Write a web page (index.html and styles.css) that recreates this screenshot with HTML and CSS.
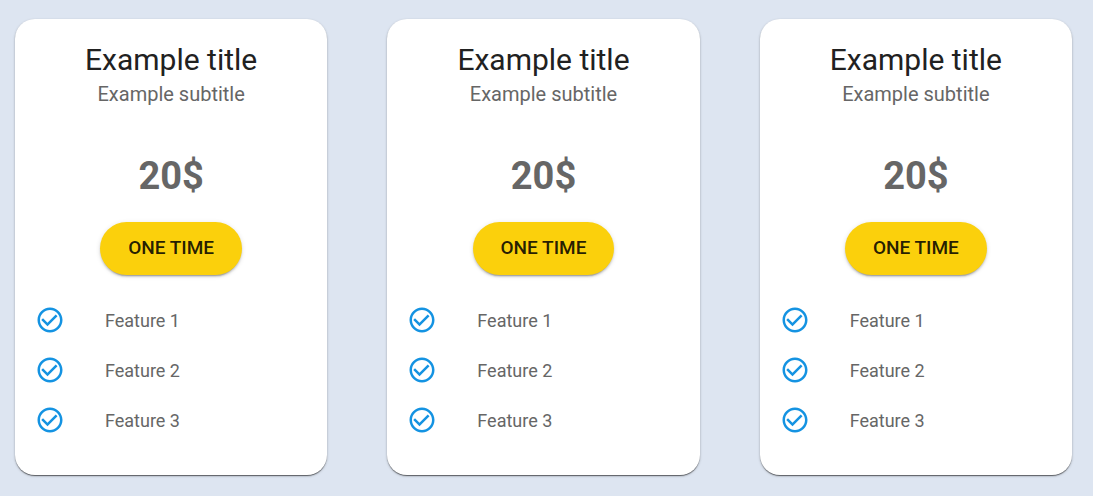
FILE: index.html
```html
<!DOCTYPE html>
<html lang="en">
<head>
<meta charset="utf-8">
<title>Pricing</title>
<link rel="stylesheet" href="styles.css">
</head>
<body>
<svg class="defs" aria-hidden="true"><symbol id="check" viewBox="0 0 24 24"><path d="M16.59 7.58 10 14.17l-3.59-3.58L5 12l5 5 8-8zM12 2C6.48 2 2 6.48 2 12s4.48 10 10 10 10-4.48 10-10S17.52 2 12 2zm0 18c-4.42 0-8-3.58-8-8s3.58-8 8-8 8 3.58 8 8-3.58 8-8 8z"/></symbol></svg>
<main class="plans">
<section class="card">
<h2 class="title">Example title</h2>
<p class="subtitle">Example subtitle</p>
<p class="price">20$</p>
<button class="buy" type="button">ONE TIME</button>
<ul class="features">
<li class="feature"><svg class="icon" aria-hidden="true"><use href="#check"/></svg>Feature 1</li>
<li class="feature"><svg class="icon" aria-hidden="true"><use href="#check"/></svg>Feature 2</li>
<li class="feature"><svg class="icon" aria-hidden="true"><use href="#check"/></svg>Feature 3</li>
</ul>
</section>
<section class="card">
<h2 class="title">Example title</h2>
<p class="subtitle">Example subtitle</p>
<p class="price">20$</p>
<button class="buy" type="button">ONE TIME</button>
<ul class="features">
<li class="feature"><svg class="icon" aria-hidden="true"><use href="#check"/></svg>Feature 1</li>
<li class="feature"><svg class="icon" aria-hidden="true"><use href="#check"/></svg>Feature 2</li>
<li class="feature"><svg class="icon" aria-hidden="true"><use href="#check"/></svg>Feature 3</li>
</ul>
</section>
<section class="card">
<h2 class="title">Example title</h2>
<p class="subtitle">Example subtitle</p>
<p class="price">20$</p>
<button class="buy" type="button">ONE TIME</button>
<ul class="features">
<li class="feature"><svg class="icon" aria-hidden="true"><use href="#check"/></svg>Feature 1</li>
<li class="feature"><svg class="icon" aria-hidden="true"><use href="#check"/></svg>Feature 2</li>
<li class="feature"><svg class="icon" aria-hidden="true"><use href="#check"/></svg>Feature 3</li>
</ul>
</section>
</main>
</body>
</html>
```
FILE: styles.css
```css
* { box-sizing: border-box; }
body {
  margin: 0;
  background: #dde5f1;
  color: #666;
  font-family: Roboto, sans-serif;
}
.defs { display: none; }
.plans {
  display: grid;
  grid-template-columns: repeat(3, 1fr);
  gap: 60px;
  padding: 19px 21px 21px 15px;
}
.card {
  display: flex;
  flex-direction: column;
  align-items: center;
  padding: 22px 20px 30px;
  border-radius: 20px;
  background: #fff;
  box-shadow: 0 2px 1px -1px rgba(0,0,0,.3), 0 1px 1px rgba(0,0,0,.3), 0 1px 3px rgba(0,0,0,.2);
}
.title {
  margin: 0;
  color: #212121;
  font-size: 30px;
  font-weight: 400;
  line-height: 38px;
}
.subtitle {
  margin: 0;
  font-size: 20px;
  line-height: 30px;
}
.price {
  margin: 43px 0 22px;
  font-size: 38px;
  font-weight: 700;
  line-height: 48px;
}
.buy {
  padding: 13px 28px 14px;
  border: 0;
  border-radius: 27px;
  background: #fbd00c;
  color: rgba(0,0,0,.87);
  font: 500 19px/26px Roboto, sans-serif;
  box-shadow: 0 3px 1px -2px rgba(0,0,0,.2), 0 2px 2px rgba(0,0,0,.14), 0 1px 5px rgba(0,0,0,.12);
}
.features {
  align-self: stretch;
  margin: 20px 0 0;
  padding: 0;
  list-style: none;
}
.feature {
  display: flex;
  align-items: center;
  gap: 40px;
  height: 50px;
  font-size: 18px;
}
.icon {
  width: 30px;
  height: 30px;
  fill: #1493e2;
}
```
